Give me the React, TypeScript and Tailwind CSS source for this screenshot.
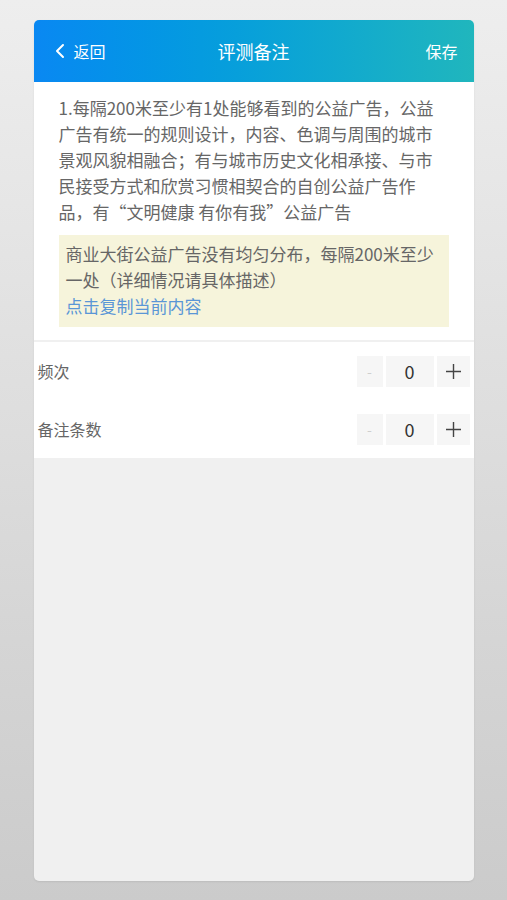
import { ChevronLeft } from "lucide-react";

const font = { fontFamily: '"Noto Sans CJK SC", "Noto Sans", sans-serif' };

function Stepper({ value }: { value: number }) {
  return (
    <div className="flex items-center gap-[3px]">
      <button className="flex h-[31px] w-[26px] items-center justify-center bg-[#f6f6f6] text-[14px] text-[#cfcfcf]">
        -
      </button>
      <div className="flex h-[31px] w-[48px] items-center justify-center bg-[#f6f6f6] text-[18px] text-[#333]">
        {value}
      </div>
      <button className="flex h-[31px] w-[33px] items-center justify-center bg-[#f6f6f6] text-[#444]">
        <svg width="17" height="17" viewBox="0 0 17 17" stroke="currentColor" strokeWidth="1.4">
          <path d="M8.5 1v15M1 8.5h15" />
        </svg>
      </button>
    </div>
  );
}

export default function App() {
  return (
    <div
      className="flex h-[900px] w-full justify-center bg-gradient-to-b from-[#eeeeee] to-[#cbcbcb] pt-5 pb-[19px]"
      style={font}
    >
      <div className="flex w-[440px] flex-col overflow-hidden rounded-[5px] bg-[#f0f0f0] shadow-[0_1px_2px_rgba(0,0,0,0.08)]">
        {/* header */}
        <div className="flex h-[62px] items-center justify-between bg-gradient-to-r from-[#0a88f2] to-[#20b6bd] px-4 text-white">
          <div className="flex w-20 items-center gap-[2px]">
            <ChevronLeft size={24} strokeWidth={2} className="-ml-[2px]" />
            <span className="text-[16px]">返回</span>
          </div>
          <span className="text-[18px]">评测备注</span>
          <div className="flex w-20 justify-end">
            <span className="text-[16px]">保存</span>
          </div>
        </div>

        {/* description */}
        <div className="bg-white px-[25px] pt-[13px] pb-[13px]">
          <p className="text-[17px] leading-[26px] text-[#666]">
            1.每隔200米至少有1处能够看到的公益广告，公益广告有统一的规则设计，内容、色调与周围的城市景观风貌相融合；有与城市历史文化相承接、与市民接受方式和欣赏习惯相契合的自创公益广告作品，有“文明健康 有你有我”公益广告
          </p>
          <div className="mt-[10px] bg-[#f6f4db] px-[7px] pt-[6px] pb-[8px] text-[17px] leading-[26px]">
            <p className="text-[#666]">商业大街公益广告没有均匀分布，每隔200米至少一处（详细情况请具体描述）</p>
            <p className="text-[#5a96d6]">点击复制当前内容</p>
          </div>
        </div>

        {/* counters */}
        <div className="mt-[2px] bg-white pl-1 pr-1">
          <div className="flex h-[58px] items-center justify-between">
            <span className="text-[16px] text-[#666]">频次</span>
            <Stepper value={0} />
          </div>
          <div className="flex h-[58px] items-center justify-between">
            <span className="text-[16px] text-[#666]">备注条数</span>
            <Stepper value={0} />
          </div>
        </div>
      </div>
    </div>
  );
}
